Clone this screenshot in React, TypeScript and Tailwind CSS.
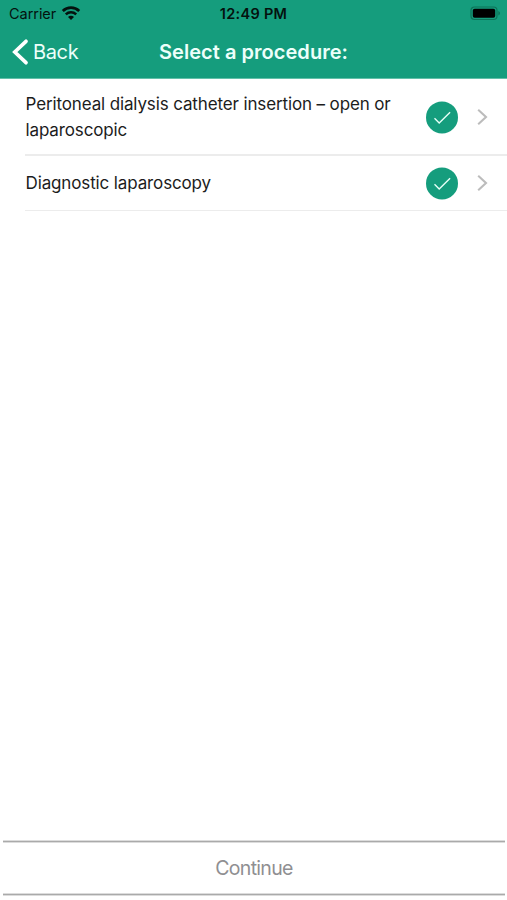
import React from "react";

function Wifi() {
  return (
    <svg width="20" height="15" viewBox="0 0 20 15" className="ml-[5px]" fill="none" stroke="#04120e">
      <path d="M1.8 4.9a12 12 0 0 1 16.4 0" strokeWidth="2.8" />
      <path d="M4.8 8.3a7.5 7.5 0 0 1 10.4 0" strokeWidth="2.5" />
      <path d="M10 14 7 11a4.2 4.2 0 0 1 6 0Z" fill="#04120e" stroke="none" />
    </svg>
  );
}

function Battery() {
  return (
    <svg width="31" height="15" viewBox="0 0 31 15">
      <rect x="1" y="1" width="26" height="12.5" rx="3.5" fill="none" stroke="#0d7459" strokeWidth="1.2" />
      <rect x="2.8" y="2.8" width="22.4" height="9" rx="1.8" fill="#000" />
      <path d="M28.3 5v4.6c1.2-.5 1.7-1.3 1.7-2.3s-.5-1.8-1.7-2.3Z" fill="#0d7459" />
    </svg>
  );
}

function Row({ label, className }: { label: string; className: string }) {
  return (
    <li className={`ml-[25px] flex items-center border-[#ececec] ${className}`}>
      <span className="w-[401px] shrink-0 pl-[0.5px] text-[17px] leading-[26px] tracking-[-0.13px] text-[#1c1c1c]">{label}</span>
      <svg width="32" height="34" viewBox="0 0 32 34" fill="none">
        <circle cx="16" cy="17.4" r="16" fill="#159d7d" />
        <path d="m8.5 18.3 4.7 4.7L24.1 12.2" stroke="#e6fff7" strokeWidth="1.4" />
      </svg>
      <svg width="12" height="18" viewBox="0 0 12 18" fill="none" className="ml-[18px]">
        <path d="m2.2 1.8 7.8 7.2-7.8 7.2" stroke="#bcbcbc" strokeWidth="2.1" />
      </svg>
    </li>
  );
}

function Rule() {
  return <div className="h-[3px] border-y border-[#dcdcdc] bg-[#aaaaaa]" />;
}

export default function App() {
  return (
    <div className="flex h-[900px] w-[507px] flex-col bg-white font-['Inter','Liberation_Sans',sans-serif]">
      <header className="h-[79px] border-b border-[#62c0a9] bg-[#159d7d]">
        <div className="grid h-[27px] grid-cols-[1fr_auto_1fr] items-center pl-[9px] pr-[6px] text-[#04120e]">
          <div className="flex items-center">
            <span className="text-[14.5px] tracking-[-0.05px]">Carrier</span>
            <Wifi />
          </div>
          <span className="mr-[3px] text-[14.5px] font-semibold tracking-[0.3px]">12:49 PM</span>
          <div className="flex justify-end">
            <Battery />
          </div>
        </div>
        <div className="grid h-[50px] grid-cols-[1fr_auto_1fr] items-center px-[11px] text-[#ecfffa]">
          <div className="flex items-center">
            <svg width="18" height="28" viewBox="0 0 18 28" fill="none">
              <path d="M15 3.3 3.8 14 15 24.7" stroke="#fff" strokeWidth="3.7" strokeLinecap="round" />
            </svg>
            <span className="ml-[4px] text-[20px] tracking-[-0.35px]">Back</span>
          </div>
          <h1 className="text-[20px] font-semibold tracking-[0.04px]">Select a procedure:</h1>
          <span />
        </div>
      </header>
      <ul className="flex-1">
        <Row label="Peritoneal dialysis catheter insertion – open or laparoscopic" className="h-[77px] border-b-2" />
        <Row label="Diagnostic laparoscopy" className="h-[55px] border-b" />
      </ul>
      <footer className="mb-[4px] ml-[3px] mr-[2px] h-[56px]">
        <Rule />
        <button className="block h-[50px] w-full pt-[2px] text-[19.5px] tracking-[-0.7px] text-[#8f8f92]">Continue</button>
        <Rule />
      </footer>
    </div>
  );
}
